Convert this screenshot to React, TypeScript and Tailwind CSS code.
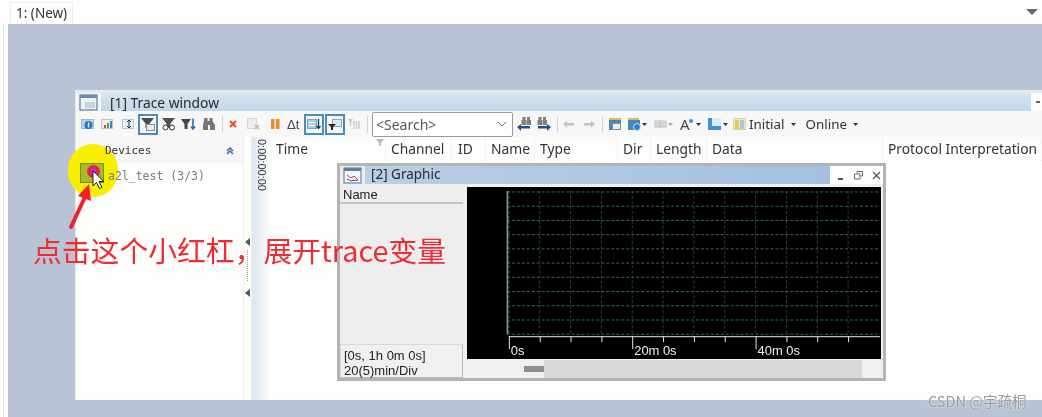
import React from 'react'

const ui = 'font-["Noto_Sans",sans-serif]'

const Caret = ({ className = '' }: { className?: string }) => (
  <svg width="5" height="3" viewBox="0 0 5 3" className={className}>
    <path d="M0 0h5L2.5 3z" fill="#333" />
  </svg>
)

const Sep = ({ className = '' }: { className?: string }) => (
  <div className={`w-px h-[17px] bg-[#d4d4d4] ${className}`} />
)

const Icon = ({ children, className = '', w = 14 }: { children: React.ReactNode; className?: string; w?: number }) => (
  <svg width={w} height="14" viewBox={`0 0 ${w} 14`} className={`shrink-0 ${className}`}>
    {children}
  </svg>
)

// 选中状态的工具按钮
const Active = ({ children, className = '' }: { children: React.ReactNode; className?: string }) => (
  <div className={`w-[20px] h-[21px] border-2 border-[#4a8dba] flex items-center justify-center shrink-0 ${className}`}>{children}</div>
)

const Funnel = ({ fill = '#555' }: { fill?: string }) => <path d="M0 1h13L8.500 6.500V11h-4V6.500z" fill={fill} />

const Binoc = ({ x = 0, fill = '#6f6f6f' }: { x?: number; fill?: string }) => (
  <g transform={`translate(${x} 0)`} fill={fill}>
    <rect x="1.500" y="0" width="3" height="4" />
    <rect x="6" y="0" width="3" height="4" />
    <rect x="0.500" y="3" width="4.500" height="5" />
    <rect x="5.500" y="3" width="4.500" height="5" />
  </g>
)

const Toolbar = () => (
  <div className="h-[26px] bg-[#f7f7f7] flex items-center pl-[5px]">
    <Icon>
      <rect x="0.500" y="2.500" width="12" height="9" fill="#bcd2e8" stroke="#9db5cc" />
      <circle cx="7.500" cy="8" r="4" fill="#1f78c4" />
      <rect x="6.800" y="5.500" width="1.500" height="5" fill="#dcecf8" />
    </Icon>
    <Icon className="ml-[6px]">
      <rect x="0.500" y="2.500" width="11" height="9" fill="#eeeeee" stroke="#c4c4c4" />
      <rect x="3" y="8" width="2" height="3" fill="#d9482b" />
      <rect x="6" y="6" width="2" height="5" fill="#4da34d" />
      <rect x="9" y="4" width="2" height="7" fill="#3c83c4" />
    </Icon>
    <Icon className="ml-[7px]">
      <rect x="0.500" y="2.500" width="11" height="9" fill="#e8eff6" stroke="#b7c6d6" />
      <path d="M7 3v8M5 5l2-2 2 2M5 9l2 2 2-2" stroke="#15395c" fill="none" />
    </Icon>
    <Active className="ml-[2px]">
      <Icon>
        <Funnel fill="#4d4d4d" />
        <rect x="5.500" y="7.500" width="8" height="6" fill="#e8edf2" stroke="#8c8c8c" />
      </Icon>
    </Active>
    <Icon className="ml-[4px]">
      <Funnel fill="#4f4f4f" />
      <circle cx="3.500" cy="10.500" r="2.500" fill="#eef2f6" stroke="#333" />
      <circle cx="10" cy="10.500" r="2.500" fill="#eef2f6" stroke="#333" />
    </Icon>
    <Icon className="ml-[5px]" w={15}>
      <path d="M0 2h10L6.500 7v5h-3V7z" fill="#454545" />
      <path d="M12 1.500v10.500M10 9.500l2 2.500 2-2.500" stroke="#1d6fc0" strokeWidth="1.600" fill="none" />
    </Icon>
    <Icon className="ml-[6px]">
      <path d="M2.500 1h3v3h2V1h3v3L13 8v5H8V8H6v5H1V8z" fill="#757575" />
    </Icon>
    <Sep className="ml-[6px]" />
    <Icon className="ml-[3px]">
      <path d="M4 4l6 6M10 4l-6 6" stroke="#e8501f" strokeWidth="2" />
    </Icon>
    <Icon className="ml-[7px]">
      <rect x="0.500" y="1.500" width="9" height="10" fill="#efefef" stroke="#d6d6d6" />
      <path d="M8 8l4 4M12 8l-4 4" stroke="#b8b8b8" strokeWidth="1.400" />
    </Icon>
    <Icon className="ml-[7px]">
      <rect x="3" y="2" width="3.500" height="10" fill="#f08a2c" />
      <rect x="8" y="2" width="3.500" height="10" fill="#f08a2c" />
    </Icon>
    <span className="ml-[5px] w-[14px] text-[13px] leading-none text-[#444] shrink-0 font-['Liberation_Sans',sans-serif]">Δt</span>
    <Active className="ml-[3px]">
      <Icon>
        <rect x="0.500" y="2.500" width="9" height="9" fill="#a8cbe8" stroke="#7ca4c6" />
        <path d="M11.500 2v9M9.500 9l2 2.500 2-2.500" stroke="#15395c" strokeWidth="1.300" fill="none" />
        <path d="M2 5.500h6M2 8.500h6" stroke="#fff" />
      </Icon>
    </Active>
    <Active className="ml-[1px]">
      <Icon>
        <rect x="4.500" y="2.500" width="9" height="7" fill="#dbe8f2" stroke="#8aa3bd" />
        <path d="M0 7h8L5 10v3H3v-3z" fill="#222" />
      </Icon>
    </Active>
    <Icon className="ml-[2px]">
      <path d="M1 2h5L4 5v4H3V5z" fill="#c4c4c4" />
      <path d="M7 4v8M9.500 4v8M12 4v8" stroke="#d0d0d0" strokeWidth="1.500" />
    </Icon>
    <Sep className="ml-[6px]" />
    <div className="ml-[4px] w-[141px] h-[25px] border border-[#9a9a9a] rounded-[2px] bg-white flex items-center justify-between pl-[3px] pr-[5px] shrink-0">
      <span className="text-[14px] text-[#555]">&lt;Search&gt;</span>
      <svg width="10" height="6" viewBox="0 0 10 6"><path d="M1 1l4 4 4-4" stroke="#666" fill="none" /></svg>
    </div>
    <Icon className="ml-[4px]">
      <Binoc x={4} fill="#808080" />
      <path d="M0 10l4-3v2h9v2.500H4V14z" fill="#1f4f86" />
    </Icon>
    <Icon className="ml-[6px]">
      <Binoc x={0} fill="#808080" />
      <path d="M14 10l-4-3v2H1v2.500h9V14z" fill="#1f4f86" />
    </Icon>
    <Sep className="ml-[6px]" />
    <Icon className="ml-[5px]" w={11}><path d="M0 7l4-3v2h7v2.500H4V11z" fill="#c2c2c2" /></Icon>
    <Icon className="ml-[10px]" w={11}><path d="M11 7L7 4v2H0v2.500h7V11z" fill="#c2c2c2" /></Icon>
    <Sep className="ml-[7px]" />
    <Icon className="ml-[5px]">
      <path d="M1 1h5l1 2h6v10H1z" fill="#3f88c5" />
      <rect x="1" y="1" width="12" height="2" fill="#e5b84a" />
      <rect x="4.500" y="6.500" width="8" height="6" fill="#e8eef4" stroke="#8a8a8a" />
    </Icon>
    <Icon className="ml-[5px]">
      <path d="M1 1h5l1 2h6v10H1z" fill="#3f88c5" />
      <rect x="1" y="1" width="11" height="2" fill="#e5b84a" />
      <circle cx="10" cy="10" r="3.500" fill="#2a7fc9" stroke="#cfe3f5" />
    </Icon>
    <Caret className="ml-[1px]" />
    <Icon className="ml-[6px]">
      <rect x="1" y="3" width="13" height="8" fill="#ddd" />
      <path d="M1 6h13M1 9h13M7 3v8" stroke="#c2c2c2" />
    </Icon>
    <Caret className="ml-[1px] opacity-40" />
    <div className="ml-[7px] w-[13px] shrink-0 relative h-[16px] leading-[16px]">
      <span className="block text-[15px] leading-[16px] text-[#444]">A</span>
      <div className="absolute right-0 top-[3px] w-[4px] h-[4px] rounded-full bg-[#2f8fe0]" />
    </div>
    <Caret className="ml-[3px]" />
    <Icon className="ml-[6px]">
      <path d="M1 1h4v8h9v4H1z" fill="#3f93d6" />
      <rect x="5" y="1" width="9" height="8" fill="#e0e9f2" />
    </Icon>
    <Caret className="ml-[2px]" />
    <Icon className="ml-[5px]">
      <rect x="0.500" y="1.500" width="12" height="11" fill="#efe9cc" stroke="#ded3a0" />
      <rect x="2" y="3" width="4" height="9" fill="#f2c94c" />
      <rect x="7" y="3" width="4" height="9" fill="#a7c8e6" />
    </Icon>
    <span className="ml-[2px] text-[13.400px] text-[#333]">Initial</span>
    <Caret className="ml-[6px]" />
    <span className="ml-[10px] text-[13.400px] text-[#333]">Online</span>
    <Caret className="ml-[6px]" />
  </div>
)

const columns = [
  { label: 'Time', cls: 'w-[116px] pl-[6px]' },
  { label: 'Channel', cls: 'w-[66px] pl-[5px]' },
  { label: 'ID', cls: 'w-[34px] pl-[6px]' },
  { label: 'Name', cls: 'w-[49px] pl-[5px]' },
  { label: 'Type', cls: 'w-[83px] pl-[5px]' },
  { label: 'Dir', cls: 'w-[33px] pl-[5px]' },
  { label: 'Length', cls: 'w-[56px] pl-[5px]' },
  { label: 'Data', cls: 'w-[176px] pl-[5px]' },
  { label: 'Protocol Interpretation', cls: 'flex-1 pl-[5px] whitespace-nowrap' },
]

const PlotChart = () => {
  const xs = Array.from({ length: 12 }, (_, i) => 41 + i * 31)
  const ys = Array.from({ length: 11 }, (_, i) => 5 + i * 14.3)
  return (
    <svg width="414" height="173" viewBox="0 0 414 173" className="block bg-black">
      {ys.map((y) => (
        <line key={y} x1="39" x2="414" y1={y} y2={y} stroke="#2f7040" strokeDasharray="3 2" />
      ))}
      {xs.map((x, i) => (
        <line key={x} x1={x} x2={x} y1="4" y2="147" stroke={i === 0 ? '#2f7040' : '#1f4a2a'} strokeDasharray="3 2" />
      ))}
      <line x1="39.500" x2="39.500" y1="4" y2="148" stroke="#8c9a8e" strokeWidth="1.500" />
      <line x1="41" x2="414" y1="150.500" y2="150.500" stroke="#e8e8e8" />
      {xs.map((x, i) => (
        <line key={x} x1={x + 0.5} x2={x + 0.5} y1="150" y2={i % 4 === 0 ? 163 : 156} stroke="#e8e8e8" />
      ))}
      <g fill="#eee" fontSize="13" fontFamily="'Liberation Sans', sans-serif">
        <text x="43" y="169">0s</text>
        <text x="167" y="169">20m 0s</text>
        <text x="291" y="169">40m 0s</text>
      </g>
    </svg>
  )
}

const WinButtons = () => (
  <div className="flex items-center w-[53px] pl-[4px] gap-[5px]">
    <div className="w-[13px] h-[14px] flex items-end justify-center pb-[2px]"><div className="w-[5px] h-[2px] bg-[#555]" /></div>
    <div className="w-[13px] h-[14px] flex items-center justify-center">
      <svg width="9" height="9" viewBox="0 0 9 9"><path d="M3 2V.500h5.500V5H7M.500 3h5.500v5H.500z" fill="none" stroke="#666" /></svg>
    </div>
    <div className="w-[13px] h-[14px] flex items-center justify-center">
      <svg width="9" height="9" viewBox="0 0 9 9"><path d="M1 1l7 7M8 1l-7 7" stroke="#555" strokeWidth="1.300" /></svg>
    </div>
  </div>
)

const GraphicWindow = () => (
  <div className={`absolute left-[337px] top-[163px] w-[549px] h-[218px] border-[3px] border-[#b4b4b4] bg-[#f0f0f0] flex flex-col ${ui}`}>
    <div className="h-[18px] flex bg-white shrink-0">
      <div className="flex-1 flex items-center bg-gradient-to-r from-[#bcd0e6] to-[#a4c0de]">
        <div className="w-[25px] h-full bg-[#e9eef4] flex items-center justify-center">
          <svg width="19" height="17" viewBox="0 0 19 17">
            <rect x="1" y="1" width="17" height="15" fill="#f4f7fa" stroke="#5c6f85" />
            <rect x="1" y="1" width="17" height="3" fill="#5f7ea3" />
            <path d="M4 8l4 3 3-2 4 4" stroke="#d0342c" fill="none" />
            <path d="M4 12l4 2 7-1" stroke="#2f5fb0" fill="none" />
          </svg>
        </div>
        <span className="ml-[6px] text-[13.500px] leading-none text-[#2a2a2a]">[2] Graphic</span>
      </div>
      <WinButtons />
    </div>
    <div className="flex-1 flex min-h-0">
      <div className="w-[123px] flex flex-col bg-[#eeeeee] font-['Liberation_Sans',sans-serif] text-[13px] text-[#222]">
        <div className="h-[20px] pl-[3px] pt-[4px] flex items-center border-b-2 border-[#c4c4c4]">Name</div>
        <div className="flex-1" />
        <div className="h-[34px] pl-[3px] leading-[15px] pt-[3px] border border-[#d8d8d8] border-r-[#bdbdbd] border-b-[#bdbdbd] bg-[#f0f0f0]">
          <div>[0s, 1h 0m 0s]</div>
          <div>20(5)min/Div</div>
        </div>
      </div>
      <div className="flex-1 pl-[4px] pt-[3px] flex flex-col">
        <PlotChart />
        <div className="h-[18px] mt-[1px] w-[414px] flex bg-[#f0f0f0]">
          <div className="ml-[57px] w-[20px] flex items-center"><div className="w-full h-[6px] bg-[#8f8f8f]" /></div>
          <div className="w-[318px] bg-[#d9d9d9]" />
        </div>
      </div>
    </div>
  </div>
)

const TraceWindow = () => (
  <div className="h-full bg-[#fdfdfb] flex flex-col border-t-[3px] border-l border-[#e6eaef]">
    <div className="h-[18px] flex bg-[#f2f4f7] shrink-0">
      <div className="w-[25px] flex items-center justify-center">
        <svg width="19" height="17" viewBox="0 0 19 17">
          <rect x="1" y="1" width="17" height="15" fill="#eef2f6" stroke="#4e627a" />
          <rect x="1" y="1" width="17" height="3" fill="#6d8cae" />
          <rect x="6" y="8" width="10" height="6" fill="#c6d4e2" />
        </svg>
      </div>
      <div className="w-[930px] flex items-center pl-[9px] bg-gradient-to-b from-[#d8e4ef] to-[#c3d6e8]">
        <span className="text-[13.800px] leading-none pt-[1px] text-[#2a2a2a]">[1] Trace window</span>
      </div>
      <div className="flex-1 bg-white flex items-center pl-[5px]"><div className="w-[4px] h-[2px] bg-[#666]" /></div>
    </div>
    <Toolbar />
    <div className="flex-1 flex min-h-0">
      <div className="w-[167px] flex flex-col">
        <div className="h-[26px] bg-[#f6f6f6] flex items-center justify-between pl-[29px] pr-[9px] pt-[2px]">
          <span className="relative z-20 font-['DejaVu_Sans_Mono',monospace] text-[11px] text-[#333]">Devices</span>
          <svg width="8" height="8" viewBox="0 0 8 8"><path d="M1 4l3-3 3 3M1 7l3-3 3 3" stroke="#2c5f9e" strokeWidth="1.300" fill="none" /></svg>
        </div>
        <div className="relative z-20 pl-[32px] pt-[5px] font-['DejaVu_Sans_Mono',monospace] text-[11.500px] text-[#7d7d7d] whitespace-pre">a2l_test (3/3)</div>
      </div>
      <div className="w-[9px] border-x border-[#efefef] flex flex-col items-center pt-[101px] shrink-0">
        <svg width="5" height="8" viewBox="0 0 5 8"><path d="M5 0v8L0 4z" fill="#555" /></svg>
        <div className="h-[31px] w-px mt-[4px] border-l border-dotted border-[#999]" />
        <svg width="5" height="8" viewBox="0 0 5 8" className="mt-[8px]"><path d="M5 0v8L0 4z" fill="#555" /></svg>
      </div>
      <div className="w-[18px] bg-gradient-to-r from-[#dde6f1] to-[#fbfcfd] flex justify-center pt-[2px] shrink-0">
        <span className="font-['Liberation_Sans',sans-serif] text-[11px] leading-none text-[#333] [writing-mode:vertical-rl]">0:00:00:00</span>
      </div>
      <div className="flex-1 min-w-0">
        <div className="h-[24px] flex items-center text-[13.800px] text-[#333] relative">
          {columns.map((c) => (
            <div key={c.label} className={`h-full flex items-center shrink-0 border-r border-[#f0f0f0] ${c.cls}`}>{c.label}</div>
          ))}
          <svg width="8" height="7" viewBox="0 0 8 7" className="absolute left-[106px] top-[2px]"><path d="M0 0h8L5 4v3H3V4z" fill="#bbb" /></svg>
        </div>
      </div>
    </div>
  </div>
)

export default function App() {
  return (
    <div className={`relative w-[1042px] h-[417px] overflow-hidden flex flex-col bg-white blur-[0.35px] ${ui}`}>
      <div className="h-[24px] flex items-end justify-between pl-[10px] pr-[3px] shrink-0 bg-[#fdfdfb]">
        <div className="w-[63px] h-[22px] bg-white border-x border-t border-[#ececec] pl-[5px] text-[13.500px] leading-[21px] text-[#333]">1: (New)</div>
        <svg width="12" height="6" viewBox="0 0 12 6" className="mb-[9px] mr-[1px]"><path d="M0 0h12L6 6z" fill="#666" /></svg>
      </div>
      <div className="flex-1 flex min-h-0">
        <div className="w-[8px] flex justify-start pl-[3px] bg-white"><div className="w-px bg-[#e4e4e4]" /></div>
        <div className="flex-1 bg-[#b8c4d6] pt-[66px] pl-[67px] pb-[17px]">
          <TraceWindow />
        </div>
      </div>

      <GraphicWindow />

      {/* annotation layer */}
      <div className="absolute z-10 left-[68px] top-[144px] w-[50px] h-[53px] rounded-full bg-[#f8ee00]" />
      <div className="absolute z-30 left-[80px] top-[163px] w-[24px] h-[20px] bg-[#a9b92a] border border-[#6f8f2a]" />
      <div className="absolute z-30 left-[87px] top-[165px] w-[13px] h-[13px] rounded-full border-[3px] border-[#e8262c] bg-[#b030c8]" />
      <svg width="13" height="20" viewBox="0 0 13 20" className="absolute z-30 left-[92px] top-[170px]">
        <path d="M1 1v15l3.500-3.500 3 6 2.500-1.200-3-5.800H12z" fill="#fff" stroke="#222" />
      </svg>
      <svg width="40" height="50" viewBox="0 0 40 50" className="absolute z-30 left-[60px] top-[183px]">
        <path d="M11 44L25 14" stroke="#f0202a" strokeWidth="4" strokeLinecap="round" />
        <path d="M29 1L18 13l13 5z" fill="#f0202a" />
      </svg>
      <div className="absolute z-30 left-[33px] top-[230px] text-[28.800px] leading-[40px] whitespace-nowrap text-[#ef2b33] font-['Noto_Sans_CJK_SC',sans-serif]">点击这个小红杠，展开trace变量</div>
      <div className="absolute z-30 left-[928px] top-[391px] text-[14.500px] leading-[20px] whitespace-nowrap text-[#9a9a9a] font-['Noto_Sans_CJK_SC',sans-serif] [text-shadow:0_0_2px_#fff]">CSDN @宇疏桐</div>
    </div>
  )
}
